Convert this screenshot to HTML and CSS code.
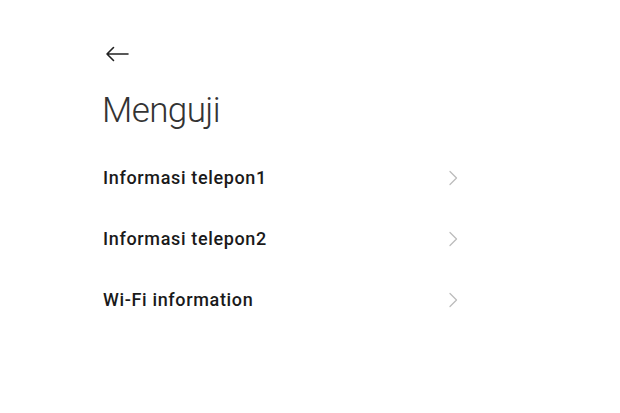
FILE: index.html
```html
<!DOCTYPE html>
<html lang="id">
<head>
    <meta charset="UTF-8">
    <meta name="viewport" content="width=device-width, initial-scale=1.0">
    <title>Menguji</title>
    <link rel="stylesheet" href="styles.css">
</head>
<body>
    <div class="page">
        <div class="top-bar">
            <button class="back-btn" aria-label="Kembali">
                <svg width="24" height="16" viewBox="0 0 24 16">
                    <path d="M23 8H2M8.5 1.5L2 8l6.5 6.5" fill="none" stroke="#222" stroke-width="1.6" stroke-linecap="round" stroke-linejoin="round"/>
                </svg>
            </button>
        </div>
        <h1 class="title">Menguji</h1>
        <ul class="menu">
            <li class="menu-item">
                <span class="label">Informasi telepon1</span>
                <svg class="chevron" width="9" height="16" viewBox="0 0 9 16"><path d="M1 1.5L7.5 8L1 14.5"/></svg>
            </li>
            <li class="menu-item">
                <span class="label">Informasi telepon2</span>
                <svg class="chevron" width="9" height="16" viewBox="0 0 9 16"><path d="M1 1.5L7.5 8L1 14.5"/></svg>
            </li>
            <li class="menu-item">
                <span class="label">Wi-Fi information</span>
                <svg class="chevron" width="9" height="16" viewBox="0 0 9 16"><path d="M1 1.5L7.5 8L1 14.5"/></svg>
            </li>
        </ul>
    </div>
</body>
</html>
```

FILE: styles.css
```css
body {
    margin: 0;
    background: #ffffff;
    font-family: Roboto, "Noto Sans", Arial, sans-serif;
}

.page {
    padding: 46px 0 0 103px;
    width: 357px;
}

.top-bar {
    height: 16px;
}

.back-btn {
    background: none;
    border: none;
    padding: 0;
    margin-left: 2px;
    display: block;
    cursor: pointer;
}

.title {
    margin: 28px 0 0 -1px;
    font-size: 35px;
    font-weight: 300;
    color: #333;
    line-height: 42px;
    letter-spacing: -0.6px;
}

.menu {
    list-style: none;
    margin: 15px 0 0 0;
    padding: 0;
}

.menu-item {
    display: flex;
    align-items: center;
    justify-content: space-between;
    height: 61px;
}

.label {
    font-size: 18px;
    font-weight: 500;
    letter-spacing: 0.65px;
    color: #1a1a1a;
}

.chevron {
    margin-right: 2px;
    fill: none;
    stroke: #bdbdbd;
    stroke-width: 1.3;
    stroke-linecap: round;
    stroke-linejoin: round;
}
```
